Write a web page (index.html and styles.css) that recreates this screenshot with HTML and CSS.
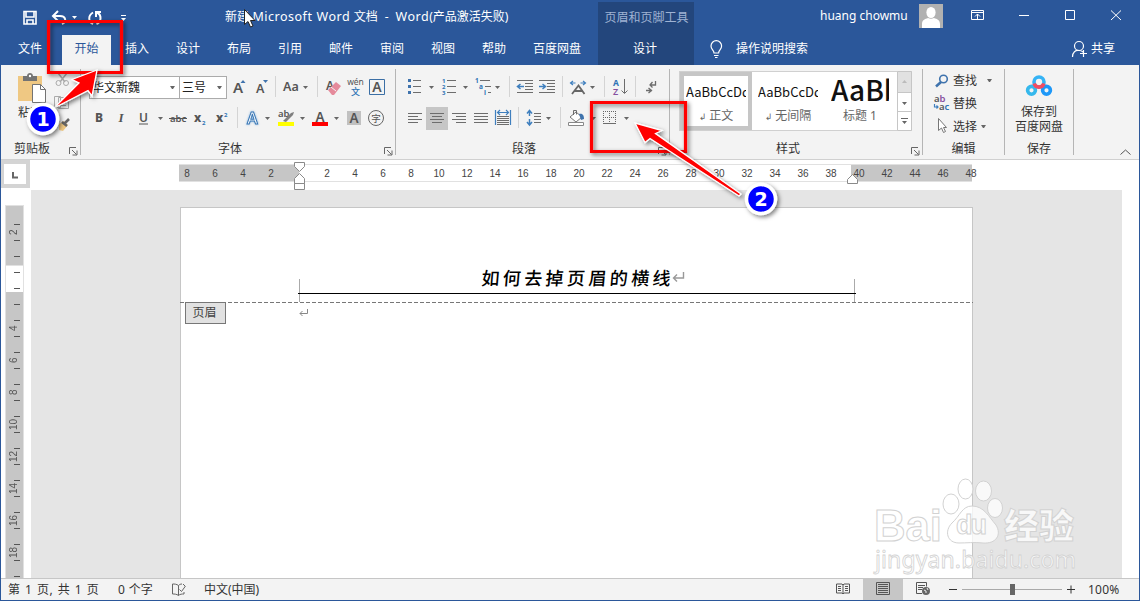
FILE: index.html
```html
<!DOCTYPE html>
<html lang="zh-CN">
<head>
<meta charset="utf-8">
<title>新建 Microsoft Word 文档 - Word</title>
<link rel="stylesheet" href="styles.css">
</head>
<body>
<div class="window">
  <header class="header">
    <div class="header-left">
      <div class="titlebar">
        <svg class="quick" width="224" height="35" viewBox="0 0 224 35" fill="none" stroke="#fff">
          <path d="M24 11.500h12v12.500H24zM26 12v5h8v-5M27 24v-4h6v4" stroke-width="1.600"/>
          <path d="M54 16h6c6 0 7 6 2 8M58 11l-5 5 5 5" stroke-width="2"/>
          <path d="M72 16h5l-2.500 3z" fill="#fff" stroke="none"/>
          <path d="M93 12.500c-5 3-5 9 0 11.500M96.500 24c5-2 5.500-9 .5-11.500M101 12h-5v5" stroke-width="2"/>
          <path d="M121 15.500h5" stroke-width="1"/><path d="M121 18h5l-2.500 3z" fill="#fff" stroke="none"/>
        </svg>
        <span class="doc-title">新建 <em class="app">Microsoft Word</em> 文档&nbsp; -&nbsp; <em class="app">Word</em>(产品激活失败)</span>
      </div>
      <nav class="tabs">
        <span class="tab file">文件</span><span class="tab active">开始</span><span class="tab">插入</span><span class="tab">设计</span><span class="tab">布局</span><span class="tab">引用</span><span class="tab">邮件</span><span class="tab">审阅</span><span class="tab">视图</span><span class="tab">帮助</span><span class="tab wide">百度网盘</span>
      </nav>
    </div>
    <div class="context"><span class="context-title">页眉和页脚工具</span><span class="context-tab">设计</span></div>
    <div class="header-right">
      <div class="account">
        <span class="user">huang chowmu</span>
        <svg width="24" height="24" viewBox="0 0 24 24"><path fill="#b1b1b1" d="M0 0h24v24H0z"/><ellipse cx="12" cy="8.500" rx="4.600" ry="5.500" fill="#fff"/><path d="M3 24v-4c0-4 3-5 6-6q3 1.500 6 0c3 1 6 2 6 6v4z" fill="#fff"/></svg>
        <svg class="controls" width="196" height="30" viewBox="943 2 196 30" fill="none" stroke="#fff">
          <path d="M971.500 11.500h12v9h-12zM971.500 13.500h12M977.500 20v-5M975 17.500l2.500-2.500 2.500 2.500M1019 16.500h10M1065.500 11.500h9v9h-9zM1111 11.500l10 9.500M1121 11.500l-10 9.500"/>
        </svg>
      </div>
      <div class="assist">
        <svg width="16" height="20" viewBox="708 39 16 20" fill="none" stroke="#fff" stroke-width="1.200"><path d="M714 53c0-3-3-3.500-3-7a5.300 5.300 0 0 1 10.600 0c0 3.500-3 4-3 7zM714 55.500h4.500M715 57.500h2.500"/></svg>
        <span class="tell">操作说明搜索</span>
        <svg class="share-icon" width="18" height="18" viewBox="1071 41 18 18" fill="none" stroke="#fff" stroke-width="1.200"><circle cx="1079" cy="47" r="4.500"/><path d="M1072.500 58c0-5 3-7 6.500-6.500 2 0 3 .5 4 1.500M1083.500 51v7M1080 54.500h7"/></svg>
        <span>共享</span>
      </div>
    </div>
  </header>

  <section class="ribbon">
    <div class="group clip">
      <div class="clip-main">
        <div class="paste">
          <svg width="34" height="34" viewBox="14 71 34 34"><path fill="#efc883" d="M18 76h24v25H18z"/><path fill="#737373" d="M23 76h4c0-4 6-4 6 0h4v5H23z"/><circle cx="30" cy="76" r="1.200" fill="#fff"/><path d="M32.500 84.500h8l5 5v13h-13z" fill="#fff" stroke="#737373"/><path d="M40.500 84.500v5h5" fill="none" stroke="#737373"/></svg>
          <span>粘贴</span>
        </div>
        <svg width="24" height="64" viewBox="52 71 24 64" fill="none" stroke="#aaa"><path d="M58 73l7 9M67 73l-7 9" stroke-width="1.500"/><circle cx="58.500" cy="83" r="2.500"/><circle cx="66" cy="83" r="2.500"/><path d="M54.500 96.500h6v11h-6zM58.500 97.500h6l4 3v8h-10z" fill="#f3f3f3"/><path d="M61 102.500h5M61 105.500h5"/><path d="M59 124l5-3 4 4-5 6-4-1z" fill="#efc883" stroke="none"/><path d="M62 122l5 4M65 123l4-4" stroke="#666" stroke-width="2.500"/></svg>
      </div>
      <div class="caption"><span>剪贴板</span><svg class="launch" width="9" height="9" viewBox="0 0 9 9"><path d="M.5 7V.5H7M3 3l4.500 4.500M8 3.500V8H3.500"/></svg></div>
    </div>

    <div class="group font">
      <div class="row">
        <span class="combo name">华文新魏<i class="caret"></i></span><span class="combo size">三号<i class="caret"></i></span>
        <svg width="24" height="24" viewBox="227 75 24 24"><text class="g" x="233" y="93" font-size="15">A</text><path class="b" d="M240.500 83h5l-2.500-3z"/></svg>
        <svg width="24" height="24" viewBox="251 75 24 24"><text class="g" x="256" y="93" font-size="12.500">A</text><path class="b" d="M263 80h5l-2.500 3z"/></svg>
        <i class="sep"></i>
        <svg width="41" height="24" viewBox="276 75 41 24"><text class="g" x="283" y="91" font-size="12.500">Aa</text><path class="c" d="M303 86h5l-2.500 3z"/></svg>
        <i class="sep"></i>
        <svg width="27" height="24" viewBox="318 75 27 24"><text class="g" x="326" y="90" font-size="12">A</text><path d="M328 90l8-8 5 4-7 9h-2z" fill="#e58a9b"/><path d="M331 87l5 4" stroke="#f3f3f3"/></svg>
        <svg width="20" height="24" viewBox="345 75 20 24"><text x="355.500" y="85" font-size="8.500" text-anchor="middle" class="g n">wén</text><text x="355.500" y="94.500" font-size="9" font-weight="500" text-anchor="middle" fill="#2e74b5">文</text></svg>
        <svg width="24" height="24" viewBox="365 75 24 24"><path d="M369.500 79.500h15v15h-15z" fill="none" stroke="#3b6fa5"/><text class="g" x="377" y="92" font-size="14" text-anchor="middle">A</text></svg>
      </div>
      <div class="row second">
        <svg width="22" height="24" viewBox="88 106 22 24"><text class="g bold" x="95" y="122" font-size="12">B</text></svg>
        <svg width="22" height="24" viewBox="110 106 22 24"><text class="g serif" x="118.500" y="122" font-size="13">I</text></svg>
        <svg width="36" height="24" viewBox="132 106 36 24"><text class="g" x="139" y="121.500" font-size="12">U</text><path d="M139 124h9" stroke="#555"/><path class="c" d="M158 117h5l-2.500 3z"/></svg>
        <svg width="22" height="24" viewBox="168 106 22 24"><text class="g" x="170" y="122" font-size="9.500">abc</text><path d="M169 118.500h18" stroke="#555"/></svg>
        <svg width="22" height="24" viewBox="190 106 22 24"><text class="g bold" x="194" y="122" font-size="12">x</text><text x="202" y="125" font-size="6" class="bt">2</text></svg>
        <svg width="25" height="24" viewBox="212 106 25 24"><text class="g bold" x="216" y="122" font-size="12">x</text><text x="224" y="117" font-size="6" class="bt">2</text></svg>
        <i class="sep"></i>
        <svg width="36" height="24" viewBox="238 106 36 24"><text x="252.500" y="123.500" font-size="16" text-anchor="middle" class="glow">A</text><path class="c" d="M265 117h5l-2.500 3z"/></svg>
        <svg width="34" height="24" viewBox="274 106 34 24"><text class="g" x="278" y="117" font-size="9.500">ab</text><path d="M283 121l8-8 3-1-1 3-7 7z" fill="#808080"/><path fill="#ff0" d="M278 122h16v4h-16z"/><path class="c" d="M300 117h5l-2.500 3z"/></svg>
        <svg width="36" height="24" viewBox="308 106 36 24"><text class="g" x="320" y="122" font-size="13.500" text-anchor="middle">A</text><path fill="red" d="M312 122h16v4h-16z"/><path class="c" d="M334 117h5l-2.500 3z"/></svg>
        <svg width="22" height="24" viewBox="344 106 22 24"><path fill="#c1c1c1" d="M347 111h14v14h-14z"/><text class="g" x="354" y="123" font-size="13.500" text-anchor="middle">A</text></svg>
        <svg width="22" height="24" viewBox="366 106 22 24"><circle cx="376" cy="118" r="7.500" fill="none" stroke="#666"/><text class="g n" x="376" y="121.500" font-size="9.500" text-anchor="middle">字</text></svg>
      </div>
      <div class="caption"><span>字体</span><svg class="launch" width="9" height="9" viewBox="0 0 9 9"><path d="M.5 7V.5H7M3 3l4.500 4.500M8 3.500V8H3.500"/></svg></div>
    </div>

    <div class="group para">
      <div class="row">
        <svg width="34" height="24" viewBox="402 75 34 24"><path class="b" d="M408 79h3v3h-3zM408 85h3v3h-3zM408 91h3v3h-3z"/><path class="l" d="M413 80.500h8M413 86.500h8M413 92.500h8"/><path class="c" d="M429 86h5l-2.500 3z"/></svg>
        <svg width="34" height="24" viewBox="436 75 34 24"><text class="bt" font-size="6"><tspan x="442" y="83">1</tspan><tspan x="442" y="89">2</tspan><tspan x="442" y="95">3</tspan></text><path class="l" d="M447 80.500h9M447 86.500h9M447 92.500h9"/><path class="c" d="M463 86h5l-2.500 3z"/></svg>
        <svg width="39" height="24" viewBox="470 75 39 24"><text class="bt" font-size="6.500"><tspan x="475" y="83">1</tspan><tspan x="479" y="89">a</tspan><tspan x="484" y="95">i</tspan></text><path class="l" d="M480 80.500h10M485 86.500h6M488 92.500h3"/><path class="c" d="M495 86h5l-2.500 3z"/></svg>
        <i class="sep"></i>
        <svg width="26" height="24" viewBox="510 75 26 24"><path class="l" d="M517 80.500h16M525 83.500h8M525 86.500h8M525 89.500h8M517 92.500h16"/><path class="bl" d="M524 86.500h-6M520.500 84l-3 2.500 3 2.500"/></svg>
        <svg width="26" height="24" viewBox="536 75 26 24"><path class="l" d="M539 80.500h16M547 83.500h8M547 86.500h8M547 89.500h8M539 92.500h16"/><path class="bl" d="M539 86.500h6M542.500 84l3 2.500-3 2.500"/></svg>
        <i class="sep"></i>
        <svg width="41" height="24" viewBox="563 75 41 24"><path d="M572 94l6.500-8.500 6 8.500M574 91h9" fill="none" stroke="#666" stroke-width="1.800"/><path class="bl thin" d="M575.500 83h-5M573 81l-2.500 2 2.500 2M580.500 83h5M583 81l2.500 2-2.500 2"/><path class="c" d="M590 86h5l-2.500 3z"/></svg>
        <i class="sep"></i>
        <svg width="30" height="24" viewBox="605 75 30 24"><text class="bt" x="613" y="86" font-size="8.500">A</text><text x="613" y="95" font-size="9" font-weight="600" fill="#8550a0">Z</text><path class="l" d="M624.500 79v14M621.500 90.500l3 3 3-3"/></svg>
        <i class="sep"></i>
        <svg width="30" height="24" viewBox="636 75 30 24"><path class="l" d="M655.500 81v4h-5M652.500 82l-2.500 3 2.500 2.500M646 90.500h6M648.500 88l3 2.500-3 2.500" stroke-width="1.300"/></svg>
      </div>
      <div class="row second">
        <svg width="24" height="24" viewBox="402 106 24 24"><path class="l" d="M408 113.500h14M408 116.500h10M408 119.500h14M408 122.500h10"/></svg>
        <svg width="22" height="24" viewBox="426 106 22 24"><path fill="#c6c6c6" d="M426 107h22v23h-22z"/><path class="l" d="M430 113.500h14M432 116.500h10M430 119.500h14M432 122.500h10"/></svg>
        <svg width="22" height="24" viewBox="448 106 22 24"><path class="l" d="M452 113.500h14M456 116.500h10M452 119.500h14M456 122.500h10"/></svg>
        <svg width="22" height="24" viewBox="470 106 22 24"><path class="l" d="M474 113.500h14M474 116.500h14M474 119.500h14M474 122.500h14"/></svg>
        <svg width="26" height="24" viewBox="492 106 26 24"><path class="bl thin" d="M495.500 110v15M510.500 110v15M498 112.500h10M500 110l-2.500 2.500 2.500 2.500M506 110l2.500 2.500-2.500 2.500"/><path class="l" d="M497 116.500h12M497 118.500h12M497 120.500h12M497 122.500h12M497 124.500h12"/></svg>
        <i class="sep"></i>
        <svg width="41" height="24" viewBox="519 106 41 24"><path class="bl" d="M529.500 111v5M527 113.500l2.500-3 2.500 3M529.500 119v6M527 122l2.500 3 2.500-3"/><path class="l" d="M534 113.500h7M534 116.500h7M534 119.500h7M534 122.500h7"/><path class="c" d="M546 117h5l-2.500 3z"/></svg>
        <i class="sep"></i>
        <svg width="37" height="24" viewBox="561 106 37 24"><path d="M570 117l6-5 6 5-6 5z" fill="#fff" stroke="#777"/><path class="l" d="M573.500 115v-4.500h3v4"/><path class="b" d="M579 114c4-1 5 2 5 5l-3 1z"/><path d="M568.500 122.500h15v3h-15z" fill="#fff" stroke="#888"/><path class="c" d="M591 117h5l-2.500 3z"/></svg>
        <svg width="38" height="24" viewBox="598 106 38 24"><path d="M603 111.500h13M603 117.500h13M603.500 111v12M609.500 111v12M615.500 111v12" fill="none" stroke="#666" stroke-dasharray="1 1"/><path class="l" d="M603 123.500h13"/><path class="c" d="M624 117h5l-2.500 3z"/></svg>
      </div>
      <div class="caption"><span>段落</span><svg class="launch" width="9" height="9" viewBox="0 0 9 9"><path d="M.5 7V.5H7M3 3l4.500 4.500M8 3.500V8H3.500"/></svg></div>
    </div>

    <div class="group styles">
      <div class="gallery">
        <div class="style chosen"><b>AaBbCcDd</b><span><i>↲</i> 正文</span></div>
        <div class="style"><b>AaBbCcDd</b><span><i>↲</i> 无间隔</span></div>
        <div class="style heading"><b>AaBb</b><span>标题 1</span></div>
        <svg class="scroller" width="15" height="60" viewBox="0 0 15 60"><path d="M.5.500h14v59H.5z" fill="#fff" stroke="#c6c6c6"/><path fill="#e1e1e1" d="M1 1h13v20H1z"/><path d="M0 21.500h15M0 40.500h15" stroke="#c6c6c6"/><path d="M5 12h5l-2.500-3z" fill="#bbb"/><path class="c" d="M5 31h5l-2.500 3zM5 50h5l-2.500 3z"/><path d="M4 47.500h7" stroke="#666"/></svg>
      </div>
      <div class="caption"><span>样式</span><svg class="launch" width="9" height="9" viewBox="0 0 9 9"><path d="M.5 7V.5H7M3 3l4.500 4.500M8 3.500V8H3.500"/></svg></div>
    </div>

    <div class="group edit">
      <div class="commands">
        <div><svg width="20" height="20" viewBox="932 69 20 20" fill="none" stroke="#3f73ad"><circle cx="943.500" cy="77" r="3.800" stroke-width="1.600"/><path d="M941 80l-5 4.500" stroke-width="2.500"/></svg><span>查找</span><i class="caret far"></i></div>
        <div><svg width="20" height="20" viewBox="932 92 20 20"><text class="g" x="934" y="100" font-size="9.500">a<tspan fill="#8550a0">b</tspan></text><text class="g" x="939" y="108" font-size="9.500">a<tspan fill="#2e74b5">c</tspan></text><path class="bl thin" d="M934.500 102v3h3.500M936.500 103.500l1.500 1.500-1.500 1.500"/></svg><span>替换</span></div>
        <div><svg width="20" height="20" viewBox="932 115 20 20"><path d="M938.500 116.500v12l3-2.500 2 4.500 2-1-2-4h3z" fill="#fff" stroke="#777"/></svg><span>选择</span><i class="caret"></i></div>
      </div>
      <div class="caption"><span>编辑</span></div>
    </div>

    <div class="group save">
      <div class="netdisk">
        <svg width="30" height="26" viewBox="1024 73 30 26" fill="none" stroke-width="3.600"><circle cx="1039" cy="82" r="5" stroke="#35b3f5"/><circle cx="1031.500" cy="90.300" r="3.900" stroke="#35b8ec"/><circle cx="1046.500" cy="90.300" r="3.900" stroke="#1e98f8"/><path d="M1034.200 83.500a5 5 0 0 0 9.600 0" stroke="#f24c62"/></svg>
        <span>保存到</span><span>百度网盘</span>
      </div>
      <div class="caption"><span>保存</span></div>
    </div>
    <div class="collapse"><svg width="11" height="7" viewBox="0 0 11 7"><path d="M.5 5.500l5-4.500 5 4.500" fill="none" stroke="#555"/></svg></div>
  </section>

  <div class="ruler-row">
    <div class="corner"><svg width="21" height="20" viewBox="0 0 21 20"><path d="M9 8v5.500h5" fill="none" stroke="#666" stroke-width="2"/></svg></div>
    <div class="ruler">
      <span>8</span><span>6</span><span>4</span><span>2</span><span></span><span>2</span><span>4</span><span>6</span><span>8</span><span>10</span><span>12</span><span>14</span><span>16</span><span>18</span><span>20</span><span>22</span><span>24</span><span>26</span><span>28</span><span>30</span><span>32</span><span>34</span><span>36</span><span>38</span><span>40</span><span>42</span><span>44</span><span>46</span><span>48</span>
      <svg class="markers" width="570" height="30" viewBox="292 160 570 30" fill="#fff" stroke="#8a8a8a"><path d="M294.500 162.500h10v4l-5 5-5-5zM294.500 183.500v-5l5-5 5 5v5zM294.500 183.500h10v6h-10zM847.500 183.500v-4l5-5 5 5v4z"/></svg>
    </div>
  </div>

  <main class="workspace">
    <div class="vruler">
      <span>2</span><span></span><span></span><span>4</span><span>6</span><span>8</span><span>10</span><span>12</span><span>14</span><span>16</span><span>18</span>
    </div>
    <div class="canvas">
      <article class="page">
        <div class="page-header">
          <h1><span>如何去掉页眉的横线</span><svg width="14" height="14" viewBox="0 0 14 14"><path d="M11.500 2v6H2M5 4.500L1.500 8 5 11.500"/></svg></h1>
        </div>
        <div class="boundary"></div>
        <div class="page-body"><span class="header-tag">页眉</span><svg width="10" height="10" viewBox="0 0 10 10"><path d="M8.500 1v4.500H1M3.500 3L1 5.500 3.500 8"/></svg></div>
      </article>
    </div>
  </main>

  <footer class="status">
    <span class="pages">第 1 页, 共 1 页</span><span class="words">0 个字</span>
    <svg width="16" height="16" viewBox="0 0 16 16" fill="none" stroke="#666"><path d="M7.500 3.500c-2-1.500-4-1.500-6-1.500v10c2 0 4 0 6 1.500 1.500-1.500 3.500-1.500 5.500-1.500v-2M7.500 3.500v10M7.500 3.500c1-1 2-1.500 3.500-1.500M8.500 7.500l2 2 4-5.500M12 2l2 2"/></svg>
    <span class="lang">中文(中国)</span>
    <svg class="views" width="240" height="22" viewBox="840 579 240 22" fill="none" stroke="#555">
      <path d="M836.500 584v9h5.500l1 1 1-1h5.500v-9h-5.500l-1 1-1-1zM843 585v9M838 586.500h3M838 588.500h3M838 590.500h3M845 586.500h3M845 588.500h3M845 590.500h3"/>
      <path fill="#c6c6c6" stroke="none" d="M863 579h40v22h-40z"/><path d="M876.500 582.500h13v12h-13zM878 584.500h10M878 586.500h10M878 588.500h10M878 590.500h10M878 592.500h10"/>
      <path d="M922 593.500h-5.500v-11h10v4M918 585.500h7M918 587.500h5M918 589.500h4"/><circle cx="926" cy="591" r="4" fill="#666" stroke="none"/><path d="M924 590l2 1v2M927 588l1 2" stroke="#eee"/>
      <path d="M949 589.500h8M1067 589.500h8M1071 585.500v8" stroke="#333"/><path d="M962 589.500h100" stroke="#aaa"/><path fill="#666" stroke="none" d="M1010 584h5v11h-5z"/>
    </svg>
    <span class="zoom">100%</span>
  </footer>
</div>

<svg class="overlay" width="1140" height="601" viewBox="0 0 1140 601">
  <defs><filter id="shadow" x="-30%" y="-30%" width="170%" height="170%"><feDropShadow dx="2" dy="2" stdDeviation="2" flood-color="#000" flood-opacity=".5"/></filter></defs>
  <path d="M244.500 9.500v15l3.500-3 2.500 5.500 2.500-1-2.500-5.500h4.500z" fill="#fff" stroke="#222"/>
  <g class="watermark">
    <text x="874" y="541" font-size="44" font-weight="bold" textLength="68" lengthAdjust="spacingAndGlyphs">Bai</text>
    <ellipse cx="951" cy="504" rx="8" ry="10"/><ellipse cx="965.500" cy="489" rx="7.500" ry="10"/><ellipse cx="983.500" cy="491" rx="8" ry="10"/><ellipse cx="995" cy="508" rx="7.500" ry="9.500"/>
    <path d="M972 506c-10 0-12 10-20 17-8 8-5 20 7 20 7 0 16-1 24 0 13 1 19-8 13-18-7-8-12-19-24-19z"/>
    <text x="956" y="534" font-size="27" font-weight="bold" textLength="31">du</text>
    <text class="cn" x="1004" y="539" font-size="35" font-weight="900">经验</text>
    <text class="url" x="875" y="568" font-size="23" textLength="201">jingyan.baidu.com</text>
  </g>
  <g filter="url(#shadow)">
    <path d="M48.500 21.500h73v51h-73zM591.500 102.500h94v49h-94z" fill="none" stroke="red" stroke-width="3.200"/>
  </g>
  <g filter="url(#shadow)" fill="red" stroke="#fff" stroke-width="1.300">
    <path d="M97 70L72 79.500 79 83 54 108 88 90.500 92 96z"/>
    <path d="M635 123L645 142.500 650 138.500 739 196 741 194 655.500 133.500 662 130.500z"/>
  </g>
  <g filter="url(#shadow)" fill="#00f" stroke="#fff" stroke-width="3.500">
    <circle cx="43" cy="119" r="14.500"/><circle cx="761" cy="199" r="14.500"/>
  </g>
  <g class="badge"><text x="43" y="126">1</text><text x="761" y="206">2</text></g>
</svg>
</body>
</html>
```
FILE: styles.css
```css
* { box-sizing: border-box; }
body { margin: 0; font: 12px/16px "Noto Sans", "Noto Sans CJK SC", sans-serif; color: #333; }
svg { display: block; flex: none; }
i { font-style: normal; }
span { white-space: nowrap; }
.window { width: 1140px; height: 601px; border: 1px solid #2b579a; border-top: 0; display: flex; flex-direction: column; background: #fff; overflow: hidden; }

.header { height: 65px; flex: none; display: flex; background: #2b579a; color: #fff; }
.header-left { width: 597px; }
.titlebar { height: 35px; display: flex; align-items: center; }
.quick { margin-left: -1px; }
.doc-title { padding: 0 0 1px 1px; word-spacing: .4px; }
.app { font-style: normal; font-size: 12.500px; letter-spacing: .5px; }
.tabs { display: flex; height: 30px; }
.tab { width: 51px; text-align: center; line-height: 28px; padding-right: 1px; }
.tab.file { width: 60px; padding-right: 2px; }
.tab.active { background: #f3f3f3; color: #2b579a; width: 49px; margin: 0 1px; padding-right: 0; }
.tab.wide { width: 75px; }
.context { width: 96px; margin-top: 2px; background: #23467c; display: flex; flex-direction: column; text-align: center; }
.context-title { height: 33px; line-height: 31px; color: #9fb3d3; padding-left: 1px; }
.context-tab { line-height: 28px; padding-right: 2px; }
.header-right { flex: 1; }
.account { height: 35px; display: flex; align-items: center; padding: 0 0 3px 126px; }
.user { width: 99px; letter-spacing: 0; }
.assist { height: 30px; display: flex; align-items: center; padding: 0 0 3px 14px; }
.tell { margin-left: 12px; width: 335px; }
.share-icon { margin-right: 2px; }

.ribbon { height: 95px; flex: none; background: #f3f3f3; border-bottom: 1px solid #d0d0d0; display: flex; }
.group { height: 86px; margin-top: 4px; border-right: 1px solid #b5b5b5; display: flex; flex-direction: column; }
.caption { margin-top: auto; height: 15px; padding-top: 2px; display: flex; align-items: center; justify-content: center; position: relative; }
.launch { position: absolute; right: 2px; top: 7px; fill: none; stroke: #666; }
.clip { width: 80px; }
.clip-main { display: flex; padding: 2px 0 0 13px; }
.clip .caption { padding-right: 17px; }
.paste { width: 38px; }
.paste span { display: block; padding-left: 4px; }
.font { width: 315px; }
.para { width: 274px; }
.styles { width: 253px; }
.edit { width: 82px; }
.save { width: 69px; }
.font .caption { padding-right: 16px; }
.para .caption { padding-right: 17px; }
.styles .caption { padding-right: 16px; }
.row { display: flex; height: 24px; margin-top: 6px; }
.row.second { margin-top: 7px; }
.font .row { padding-left: 8px; }
.font .row.second { padding-left: 7px; }
.para .row { padding-left: 6px; }
.sep { width: 1px; height: 21px; margin-top: 1px; background: #d4d4d4; flex: none; }
.combo { height: 23px; margin-top: 1px; border: 1px solid #ababab; background: #fff; color: #222; display: flex; justify-content: space-between; align-items: center; padding: 0 4px 0 2px; }
.combo.name { width: 91px; }
.combo.size { width: 47px; border-left: 0; }
.caret { border: 2.500px solid transparent; border-top: 3px solid #666; border-bottom: 0; width: 5px; height: 3px; }
.g { fill: #555; font-weight: 600; }
.g.n { font-weight: 400; }
.g.bold { font-weight: 800; }
.g.serif { font-family: "Liberation Serif", serif; font-style: italic; }
.glow { fill: #fff; stroke: #3b78b5; stroke-width: 1px; font-weight: 600; filter: drop-shadow(0 0 1px #8db8e2); }
.b { fill: #3f73ad; }
.bt { fill: #2e74b5; font-weight: 700; }
.bl { stroke: #3f7fbe; fill: none; stroke-width: 1.500px; }
.bl.thin { stroke-width: 1.200px; }
.l { stroke: #6d6d6d; fill: none; }
.c { fill: #666; }
.gallery { margin: 2px 0 0 9px; width: 233px; height: 60px; display: flex; background: #fff; border: 1px solid #d0d0d0; border-right: 0; }
.scroller { margin: -1px 0 0; }
.style { width: 72px; height: 58px; padding: 11px 6px 0 6px; text-align: center; }
.style.chosen { border: 4px solid #c6c6c6; padding: 7px 2px 0 2px; }
.style b { display: block; overflow: hidden; white-space: nowrap; text-align: left; font: 13px/18px "Noto Sans CJK SC", sans-serif; letter-spacing: 0; color: #111; height: 18px; }
.style > span { display: block; margin-top: 7px; color: #666; }
.style > span i { font: 9px "DejaVu Sans", sans-serif; }
.style.heading { width: 73px; padding: 1px 8px 0 7px; }
.style.heading b { height: 31px; font: 500 28px/32px "Noto Sans CJK SC", sans-serif; }
.style.heading > span { margin-top: 4px; }
.commands { padding: 0 0 0 9px; }
.commands div { display: flex; align-items: center; height: 23px; gap: 1px; }
.commands .caret { margin-left: 3px; }
.commands .caret.far { margin-left: 9px; }
.netdisk { padding-top: 4px; text-align: center; line-height: 15px; }
.netdisk svg { margin: 0 auto 5px; }
.netdisk span { display: block; }
.collapse { flex: 1; padding: 84px 0 0 46px; }

.ruler-row { height: 30px; flex: none; display: flex; }
.corner { width: 29px; height: 28px; border: 4px solid #d4d4d4; border-left-width: 3px; }
.ruler { margin: 4px 0 0 143px; width: 812px; height: 18px; display: flex; position: relative;
  font: 10px/19px "Liberation Sans", sans-serif; color: #444;
  background: linear-gradient(90deg, #c6c6c6 120px, #fff 120px 672px, #c6c6c6 672px) 6px 1px / 793px 16px no-repeat, linear-gradient(#e1e1e1, #e1e1e1) 6px 0 / 793px 18px no-repeat; }
.ruler span { width: 28px; text-align: center; }
.markers { position: absolute; left: 119px; top: -4px; }

.workspace { flex: 1; display: flex; min-height: 0; }
.vruler { width: 19px; margin: 15px 7px 0 4px; padding-top: 10px; overflow: hidden; font: 10px/14px "Liberation Sans", sans-serif; color: #555;
  background: repeating-linear-gradient(#555 0 1px, transparent 1px 16px) 8px 18px / 6px 400px no-repeat, linear-gradient(#c6c6c6 59px, #e1e1e1 59px 60px, #fff 60px 86px, #c6c6c6 86px);
  border: 1px solid #e1e1e1; border-bottom: 0; }
.vruler span { display: block; height: 32px; width: 17px; writing-mode: vertical-rl; transform: rotate(180deg); text-align: center; line-height: 15px; }
.canvas { width: 1091px; background: #e5e5e5; padding: 17px 0 0 149px; }
.page { width: 793px; height: 372px; background: #fff; border: 1px solid #c6c6c6; border-bottom: 0; }
.page-header { width: 556px; margin: 71px 0 0 118px; height: 23px; border: 1px solid #aaa; border-width: 0 1px; }
h1 { margin: 0 -2px; height: 15px; border-bottom: 1px solid #000; display: flex; justify-content: center; font: 500 18px/1 "Noto Sans CJK SC", sans-serif; letter-spacing: 3.400px; color: #000; line-height: 0; padding-left: 13px; }
h1 span { transform: translateY(-2px) skewX(-5deg); }
h1 svg { margin: -9px 0 0 -2px; fill: none; stroke: #999; stroke-width: 1.400px; }
.boundary { height: 1px; margin: 0 -1px; background: repeating-linear-gradient(90deg, #777 0 4px, transparent 4px 6px); }
.page-body { display: flex; }
.page-body svg { margin: 5px 0 0 73px; fill: none; stroke: #888; }
.header-tag { width: 41px; height: 22px; margin: -1px 0 0 4px; border: 1px solid #777; background: #e1e1e1; text-align: center; line-height: 20px; color: #444; padding-right: 2px; }

.status { height: 22px; flex: none; border-top: 1px solid #c6c6c6; background: #f3f3f3; display: flex; align-items: center; }
.status span { padding-top: 1px; }
.status .pages { width: 111px; padding-left: 7px; letter-spacing: .3px; word-spacing: 1.400px; }
.status .words { width: 59px; padding-left: 6px; word-spacing: .8px; }
.lang { margin-left: 17px; }
.views { margin-left: auto; overflow: visible; }
.status .zoom { width: 59px; padding-left: 8px; letter-spacing: .2px; }

.overlay { position: absolute; left: 0; top: 0; }
.badge { font: bold 19px "DejaVu Sans", sans-serif; fill: #fff; text-anchor: middle; }
.watermark { font-family: "Liberation Sans", sans-serif; fill: rgba(255, 255, 255, .75); stroke: #d2d2d2; stroke-width: 1px; }
.watermark .cn { font-family: "Noto Sans CJK SC", sans-serif; }
.watermark .url { font-family: "Noto Sans", sans-serif; stroke-width: .8px; }
```
